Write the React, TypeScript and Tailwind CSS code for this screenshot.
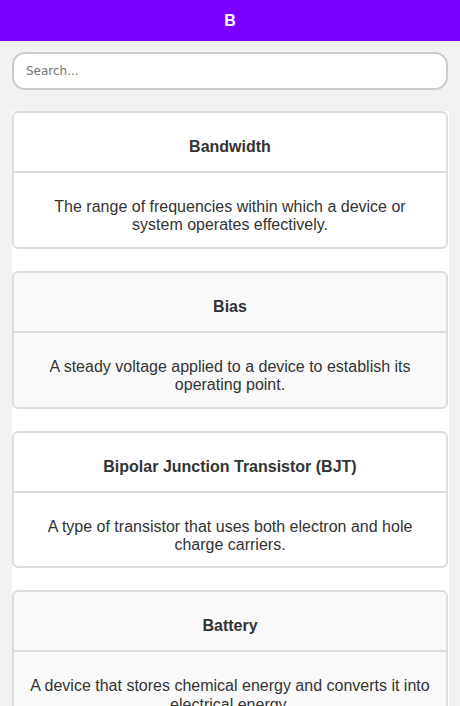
const terms = [
  {
    term: "Bandwidth",
    meaning:
      "The range of frequencies within which a device or system operates effectively.",
  },
  {
    term: "Bias",
    meaning:
      "A steady voltage applied to a device to establish its operating point.",
  },
  {
    term: "Bipolar Junction Transistor (BJT)",
    meaning:
      "A type of transistor that uses both electron and hole charge carriers.",
  },
  {
    term: "Battery",
    meaning:
      "A device that stores chemical energy and converts it into electrical energy.",
  },
];

const App = () => {
  return (
    <div className="min-h-screen bg-[#f2f2f2] font-['Liberation_Sans',Arial,sans-serif] text-[#333]">
      <header className="flex h-[41px] items-center justify-center bg-[#7b00ff] text-base font-bold text-white">
        B
      </header>
      <main className="pl-3 pr-[11px] pt-[11px]">
        <input
          className="h-[38px] w-[436px] rounded-[13px] border-2 border-[#ccc] bg-white px-3 font-['DejaVu_Sans',sans-serif] text-xs text-[#333] outline-none placeholder:text-[#757575]"
          placeholder="Search..."
        />
        <div className="mt-[21px] flex flex-col gap-[22px] bg-white">
          {terms.map((t, i) => (
            <div
              key={t.term}
              className={
                "w-[436px] rounded-[6px] border-2 border-[#ddd] " +
                (i % 2 === 0 ? "bg-white" : "bg-[#f9f9f9]")
              }
            >
              <div className="h-[60px] border-b-2 border-[#ddd] px-[15px] pt-[25px] text-center text-base font-bold leading-[18.4px]">
                {t.term}
              </div>
              <p className="px-[15px] pb-[12px] pt-[25px] text-center text-base leading-[18.4px]">
                {t.meaning}
              </p>
            </div>
          ))}
        </div>
      </main>
    </div>
  );
};

export default App;
